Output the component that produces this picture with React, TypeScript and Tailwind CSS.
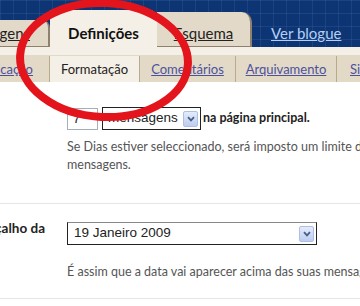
function DropButton() {
  return (
    <span className="flex h-[16px] w-[15px] shrink-0 items-center justify-center rounded-[2px] border border-[#aebfe3] bg-[linear-gradient(#e4ecfc,#bccdf0)]">
      <svg width="8" height="6" viewBox="0 0 8 6">
        <path d="M1 1.2 L4 4.4 L7 1.2" stroke="#4b5f86" strokeWidth="1.8" fill="none" />
      </svg>
    </span>
  )
}

const subTabs = [
  { label: 'Comentários', width: 'w-[96px]' },
  { label: 'Arquivamento', width: 'w-[101px]' },
]

export default function App() {
  return (
    <div className="relative h-[306px] w-[360px] overflow-hidden bg-white font-['Lato','Open_Sans',sans-serif] text-[#222]">
      {/* main tabs on navy header */}
      <div className="flex h-[47px] items-end bg-[#0e3573] bg-[linear-gradient(rgba(110,150,215,0.14)_1px,transparent_1px),linear-gradient(90deg,rgba(110,150,215,0.14)_1px,transparent_1px)] bg-[size:13px_13px]">
        <div className="flex h-[27px] w-[50px] shrink-0 items-end justify-end overflow-hidden rounded-tr-[8px] border-r-2 border-b border-[#8e816d] bg-[#e2d9c9] pr-[18px] pb-[5px]">
          <span className="whitespace-nowrap text-[15px] leading-4 underline">Mensagens</span>
        </div>
        <div className="flex h-[37px] w-[107px] shrink-0 items-end justify-center rounded-tr-[8px] bg-[#f5f0e7] pb-[6px]">
          <span className="text-[15px] leading-4 font-bold text-[#111]">Definições</span>
        </div>
        <div className="flex h-[35px] w-[95px] shrink-0 items-end justify-center rounded-tr-[10px] border-r-2 border-b border-[#8e816d] bg-[#e2d9c9] pb-[5px]">
          <span className="text-[15px] leading-4 underline">Esquema</span>
        </div>
        <span className="ml-[19px] pb-[6px] text-[15px] leading-4 text-[#b4cff4] underline">Ver blogue</span>
      </div>

      <div className="h-[9px] border-b border-[#e3d9c8] bg-[#f5f0e7]" />

      {/* sub tabs */}
      <div className="flex h-[26px] bg-[#f5f0e7] text-[13px] leading-4">
        <div className="flex w-[50px] shrink-0 items-center justify-end overflow-hidden border-r border-[#bba98c] bg-[#e3d9c7] pr-[16px]">
          <span className="whitespace-nowrap text-[#4c519e] underline">Publicação</span>
        </div>
        <div className="flex w-[90px] shrink-0 items-center justify-center border-r border-[#bba98c] bg-[#f5f0e7]">
          <span>Formatação</span>
        </div>
        {subTabs.map((t) => (
          <div
            key={t.label}
            className={`flex ${t.width} shrink-0 items-center justify-center border-r border-[#bba98c] bg-[#e3d9c7]`}
          >
            <span className="text-[#4c519e] underline">{t.label}</span>
          </div>
        ))}
        <div className="flex flex-1 items-center bg-[#e3d9c7] pl-[13px]">
          <span className="whitespace-nowrap text-[#4c519e] underline">Site feed</span>
        </div>
      </div>

      {/* posts on main page */}
      <div className="pt-[25px] pl-[67px]">
        <div className="flex h-[23px] items-center">
          <div className="h-[22px] w-[31px] border border-[#a7aeb8] px-[5px] font-['Liberation_Sans',sans-serif] text-[13px] leading-[20px]">
            7
          </div>
          <div className="ml-[4px] flex h-[23px] w-[99px] items-center justify-between border border-[#222] pr-[2px] pl-[5px] font-['Liberation_Sans',sans-serif] text-[13.5px]">
            <span>mensagens</span>
            <DropButton />
          </div>
          <span className="ml-[2px] whitespace-nowrap text-[12.5px] font-bold">na página principal.</span>
        </div>
        <p className="mt-[8px] whitespace-nowrap text-[12.5px] leading-[18px] text-[#555]">
          Se Dias estiver seleccionado, será imposto um limite de 500
          <br />
          mensagens.
        </p>
      </div>

      {/* date header format */}
      <div className="mt-[29px] border-t border-[#e6e6e6]">
        <div className="flex">
          <div className="flex w-[45px] shrink-0 justify-end overflow-hidden pt-[16px]">
            <span className="whitespace-nowrap text-[13.5px] leading-4 font-bold">Formato do cabeçalho da</span>
          </div>
          <div className="ml-[22px] pt-[18px]">
            <div className="flex h-[23px] w-[250px] items-center justify-between border border-[#222] border-t-[#888] pr-[2px] pl-[6px] font-['Liberation_Sans',sans-serif] text-[13.5px]">
              <span>19 Janeiro 2009</span>
              <DropButton />
            </div>
            <p className="mt-[18px] whitespace-nowrap text-[12.5px] leading-[18px] text-[#555]">
              É assim que a data vai aparecer acima das suas mensagens.
            </p>
          </div>
        </div>
        <div className="mt-[17px] border-t border-[#e6e6e6]" />
      </div>

      {/* red marker circle drawn over the screenshot */}
      <svg className="pointer-events-none absolute top-0 left-0" width="360" height="306">
        <ellipse
          cx="104"
          cy="60"
          rx="84"
          ry="57"
          transform="rotate(3 104 60)"
          fill="none"
          stroke="#e3141c"
          strokeWidth="8"
        />
      </svg>
    </div>
  )
}
